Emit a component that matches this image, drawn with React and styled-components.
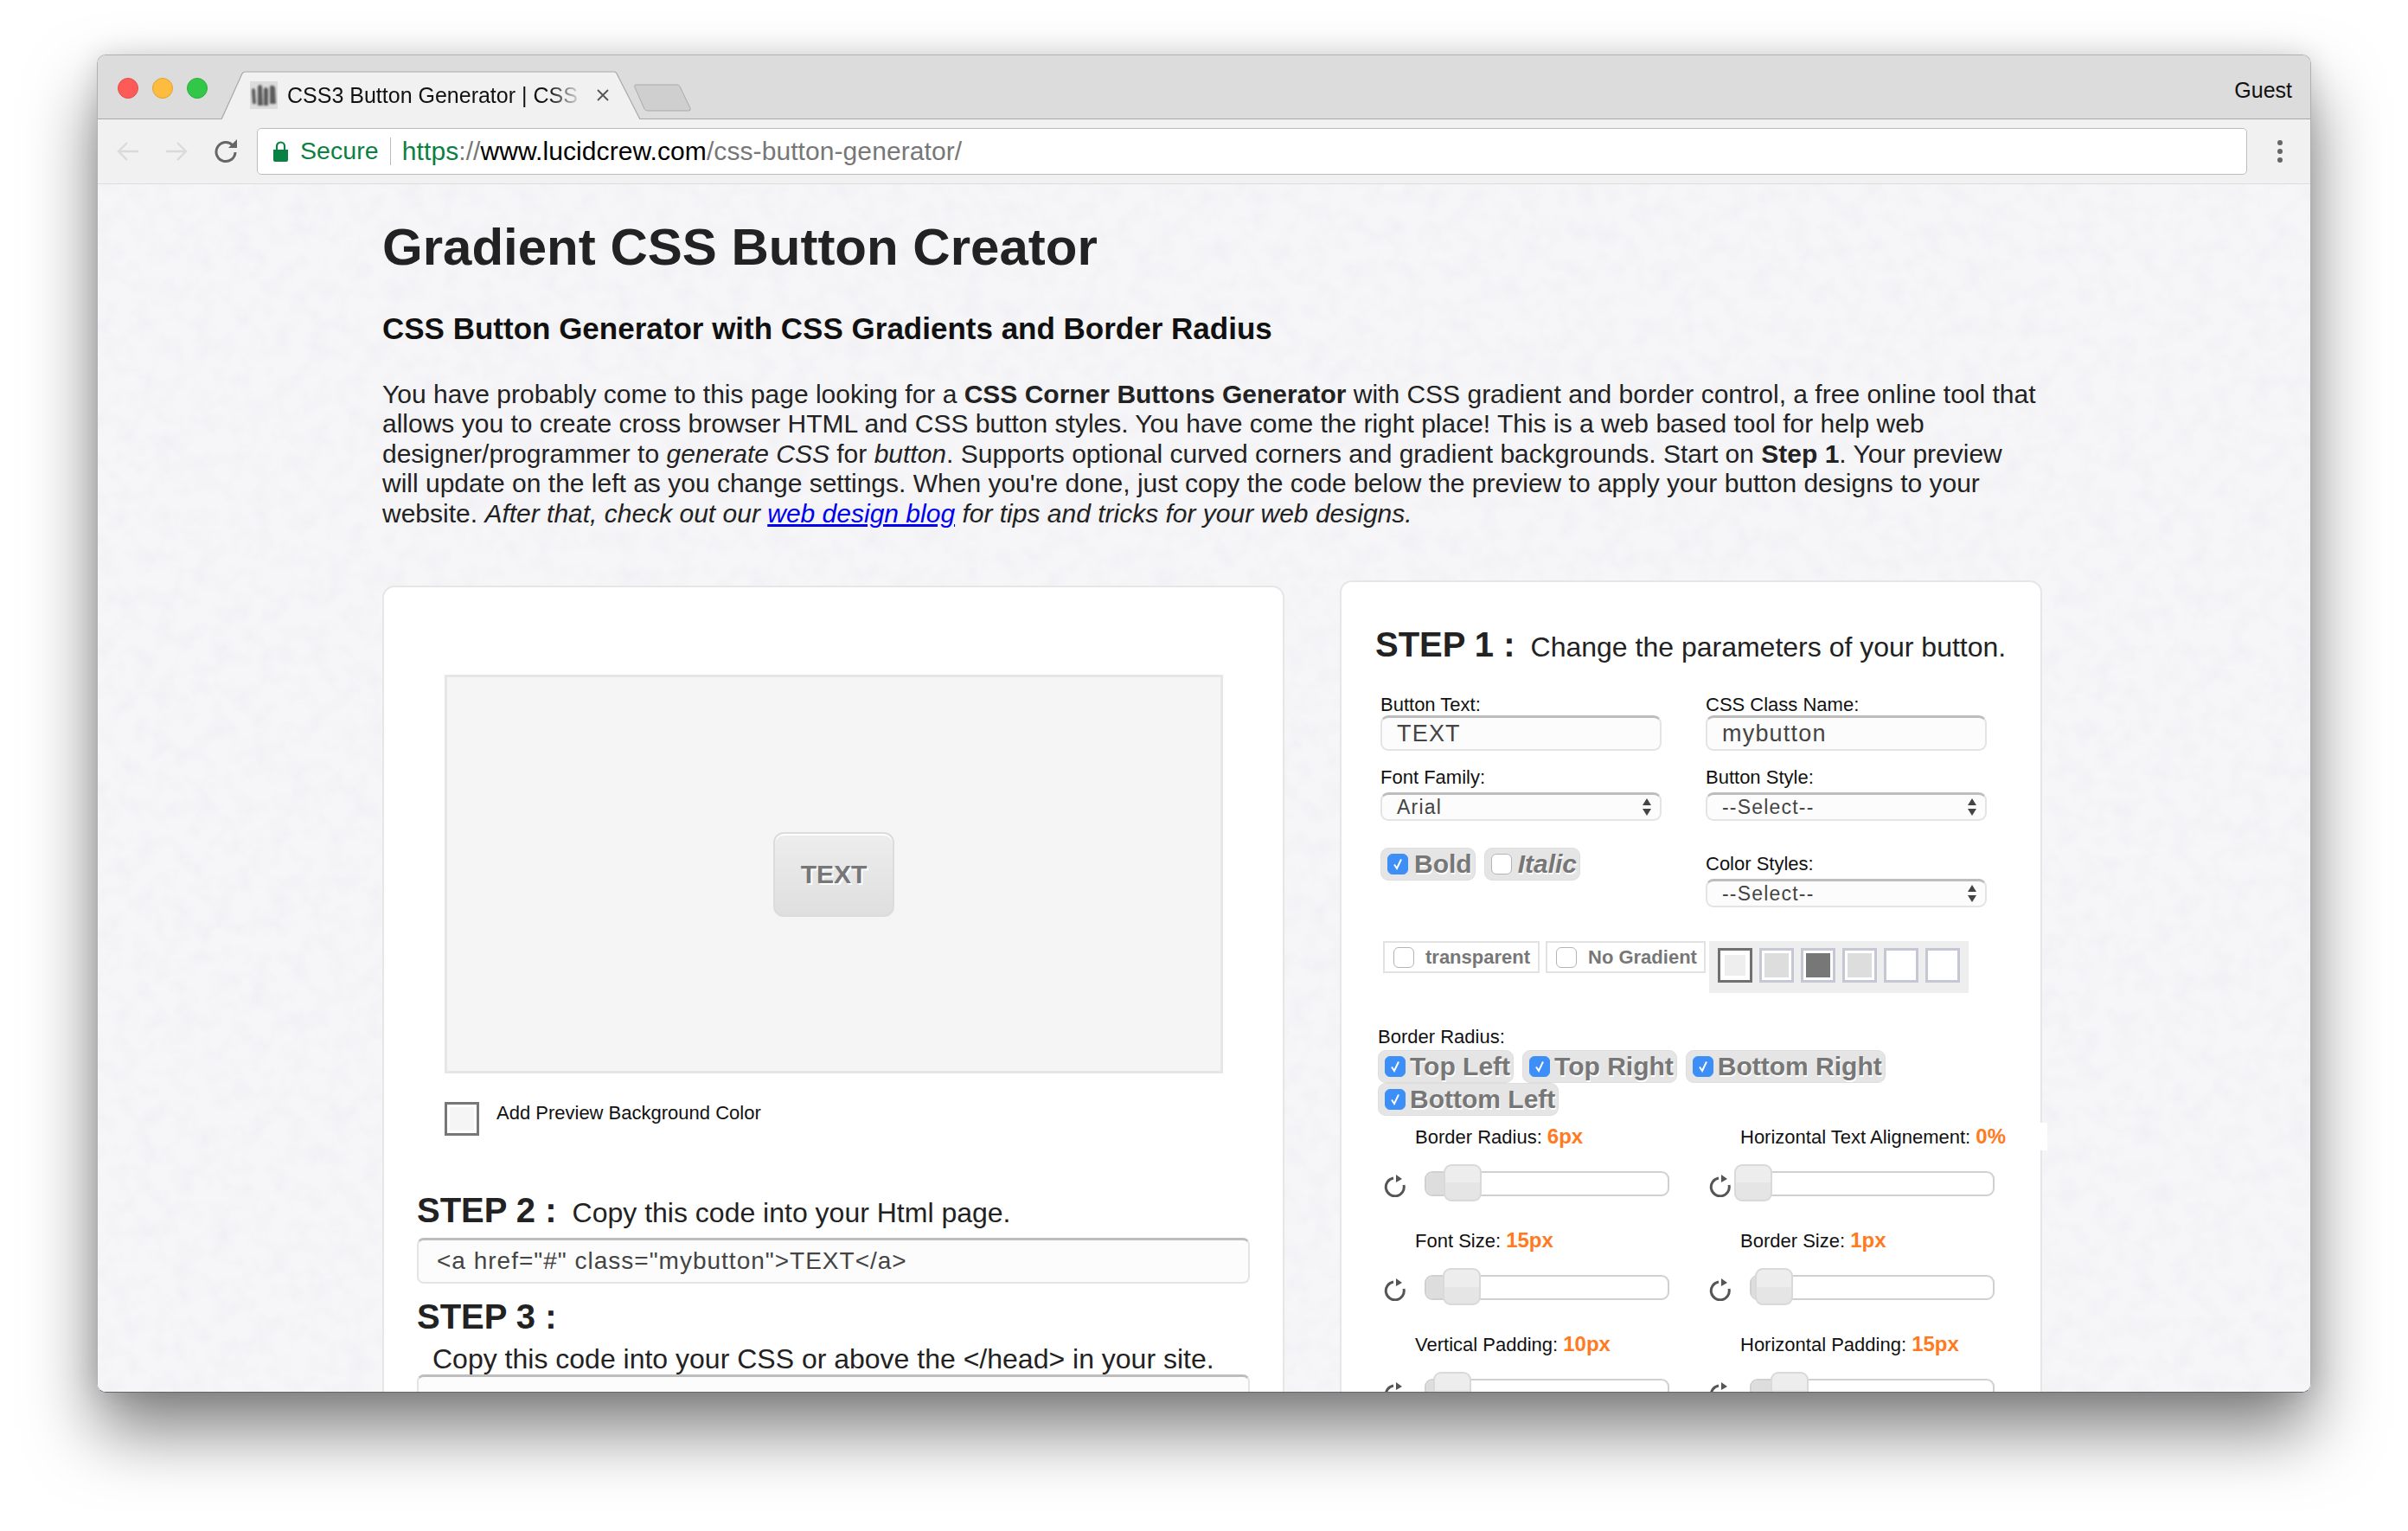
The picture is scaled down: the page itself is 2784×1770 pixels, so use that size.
import React from "react"
import styled, { createGlobalStyle } from "styled-components"

const GlobalStyle = createGlobalStyle`
    html, body {
        margin: 0;
        height: 100%;
        background: #fff;
        overflow: hidden;
        font-family: "Liberation Sans", Arial, sans-serif;
    }
    * { box-sizing: border-box; }
`

const Window = styled.div`
    width: 2560px;
    height: 1547px;
    margin: 63px 0 0 112px;
    display: flex;
    flex-direction: column;
    border-radius: 10px;
    overflow: hidden;
    border: 1px solid #b0b0b0;
    border-bottom-color: #666;
    box-shadow: 0 44px 80px rgba(0, 0, 0, 0.5), 0 0 30px rgba(0, 0, 0, 0.12);
`
const TabStrip = styled.div`
    position: relative;
    height: 74px;
    flex: none;
    display: flex;
    align-items: flex-start;
    background: #dcdcdc;
    border-bottom: 1px solid #a8a8a8;
`
const Lights = styled.div`
    display: flex;
    gap: 16px;
    padding: 26px 0 0 23px;
`
const Light = styled.span`
    width: 24px;
    height: 24px;
    border-radius: 50%;
    background: ${props => props.$color};
    border: 1px solid ${props => props.$edge};
`
const Tab = styled.div`
    position: relative;
    width: 484px;
    height: 56px;
    margin: 18px 0 0 16px;
    display: flex;
    align-items: center;
    padding: 0 0 0 33px;
`
const TabShape = styled.svg`
    position: absolute;
    left: 0;
    top: 0;
`
const Favicon = styled.svg`
    position: relative;
    flex: none;
`
const TabTitle = styled.span`
    position: relative;
    width: 352px;
    margin-left: 11px;
    overflow: hidden;
    white-space: nowrap;
    font-size: 25px;
    color: #111;
    -webkit-mask-image: linear-gradient(to right, #000 86%, transparent 97%);
    mask-image: linear-gradient(to right, #000 86%, transparent 97%);
`
const TabClose = styled.svg`
    position: relative;
    margin-left: 6px;
`
const NewTab = styled.svg`
    margin: 33px 0 0 -7px;
`
const Guest = styled.span`
    margin: 26px 21px 0 auto;
    font-size: 25px;
    line-height: 29px;
    color: #111;
`
const Toolbar = styled.div`
    height: 75px;
    flex: none;
    display: flex;
    align-items: center;
    background: #f1f1f1;
    border-bottom: 1px solid #dcdcdc;
`
const NavIcons = styled.div`
    width: 184px;
    padding-left: 22px;
    display: flex;
    align-items: center;
    gap: 30px;
`
const Address = styled.div`
    width: 2301px;
    height: 54px;
    display: flex;
    align-items: center;
    background: #fff;
    border: 1px solid #bcbcbc;
    border-radius: 5px;
    font-size: 30px;
    letter-spacing: 0.08px;
    padding-left: 18px;
    margin-top: -1px;
`
const Secure = styled.span`
    margin-left: 14px;
    font-size: 28.5px;
    color: #0b8043;
`
const Divider = styled.span`
    width: 1px;
    height: 32px;
    margin: 0 13px;
    background: #bbb;
`
const UrlPart = styled.span`
    color: ${props => props.$color};
`
const Dots = styled.div`
    margin-left: 35px;
    display: flex;
    flex-direction: column;
    gap: 4px;
    span {
        width: 6px;
        height: 6px;
        border-radius: 50%;
        background: #666;
    }
`
const Content = styled.div`
    position: relative;
    isolation: isolate;
    flex: 1;
    min-height: 0;
    padding: 38px 0 0 329px;
    background-color: #f6f6f8;
`
const Paper = styled.svg`
    position: absolute;
    left: 0;
    top: 0;
    width: 100%;
    height: 100%;
    z-index: -1;
`
const Title = styled.h1`
    margin: 0;
    font-size: 60px;
    line-height: 69px;
    font-weight: 700;
    color: #222;
`
const Subtitle = styled.h2`
    margin: 39px 0 0;
    font-size: 35px;
    line-height: 41px;
    font-weight: 700;
    color: #111;
`
const Intro = styled.p`
    margin: 39px 0 0;
    width: 1918px;
    font-size: 30px;
    line-height: 34.4px;
    color: #222;
    a { color: #00e; }
`
const Columns = styled.div`
    display: flex;
    align-items: flex-start;
    gap: 64px;
    margin-top: 60px;
`
const LeftCard = styled.div`
    width: 1043px;
    margin-top: 6px;
    padding: 101px 0 0 38px;
    background: #fff;
    border: 2px solid #e6e6e6;
    border-radius: 14px;
`
const RightCard = styled.div`
    width: 812px;
    padding: 49px 0 0 39px;
    background: #fff;
    border: 2px solid #e6e6e6;
    border-radius: 14px;
`
const Preview = styled.div`
    width: 900px;
    height: 461px;
    margin-left: 32px;
    display: flex;
    align-items: center;
    justify-content: center;
    background: #f5f5f5;
    border: 3px solid #e6e6e6;
`
const PreviewButton = styled.div`
    width: 140px;
    height: 98px;
    display: flex;
    align-items: center;
    justify-content: center;
    border: 2px solid #dcdcdc;
    border-radius: 12px;
    background: linear-gradient(#ededed, #dfdfdf);
    box-shadow: inset 0 2px 0 #fff;
    font-size: 30px;
    font-weight: 700;
    color: #777;
    text-shadow: 2px 2px 0 #fff;
`
const PreviewOption = styled.div`
    display: flex;
    margin: 33px 0 0 32px;
    font-size: 22px;
    color: #111;
`
const OptionSwatch = styled.span`
    width: 40px;
    height: 39px;
    margin-right: 20px;
    background: #f5f5f5;
    border: 3px solid #777;
    box-shadow: inset 0 0 0 3px #fff;
`
const StepHead = styled.div`
    display: flex;
    align-items: baseline;
    height: 47px;
    margin-top: ${props => props.$top || 0}px;
    font-size: 40px;
    line-height: 47px;
    font-weight: 700;
    color: #222;
    white-space: pre;
`
const StepText = styled.span`
    margin-left: 18px;
    font-size: 32px;
    font-weight: 400;
    color: #222;
`
const StepNote = styled.div`
    height: 38px;
    margin: 5px 0 0 18px;
    font-size: 32px;
    line-height: 40px;
    color: #222;
`
const CodeBox = styled.div`
    width: 963px;
    height: ${props => props.$height}px;
    margin-top: ${props => props.$top}px;
    padding: 0 0 0 21px;
    display: flex;
    align-items: center;
    background: #fcfcfc;
    border: 2px solid #e4e4e4;
    border-top: 3px solid #bdbdbd;
    border-radius: 8px;
    font-size: 28px;
    letter-spacing: 1px;
    color: #444;
`
const Row = styled.div`
    display: grid;
    grid-template-columns: 376px 325px;
    align-items: start;
    margin: ${props => props.$top}px 0 0 6px;
`
const Field = styled.div`
    padding-top: ${props => props.$pad || 0}px;
`
const Label = styled.div`
    height: 25px;
    font-size: 22px;
    line-height: 25px;
    color: #111;
`
const TextInput = styled.div`
    width: 325px;
    height: 41px;
    padding-left: 17px;
    display: flex;
    align-items: center;
    background: #fcfcfc;
    border: 2px solid #e4e4e4;
    border-top: 3px solid #bdbdbd;
    border-radius: 9px;
    font-size: 27px;
    letter-spacing: 1.2px;
    color: #444;
`
const SelectBox = styled.div`
    width: 325px;
    height: 33px;
    margin-top: 5px;
    padding: 0 9px 0 17px;
    display: flex;
    align-items: center;
    justify-content: space-between;
    background: #fcfcfc;
    border: 2px solid #e4e4e4;
    border-top: 3px solid #bdbdbd;
    border-radius: 9px;
    font-size: 23px;
    letter-spacing: 1.2px;
    color: #444;
`
const Chips = styled.div`
    display: flex;
    flex-wrap: wrap;
    column-gap: 10px;
    width: ${props => props.$width || 640}px;
    margin-left: ${props => props.$left || 0}px;
`
const Chip = styled.div`
    height: 38px;
    padding: 0 3px 0 7px;
    display: flex;
    align-items: center;
    gap: ${props => props.$gap || 7}px;
    background: #e5e5e5;
    border: 1px solid #dedede;
    border-radius: 9px;
    font-size: 30px;
    font-style: ${props => (props.$italic ? "italic" : "normal")};
    font-weight: 700;
    color: #777;
    text-shadow: 1px 2px 0 #fff;
`
const Tick = styled.span`
    width: 24px;
    height: 24px;
    flex: none;
    display: flex;
    align-items: center;
    justify-content: center;
    border-radius: 6px;
    background: ${props => (props.$on ? "#3d8ef7" : "#fff")};
    border: 1px solid ${props => (props.$on ? "#3d8ef7" : "#b4b4b4")};
`
const ColorRow = styled.div`
    display: flex;
    align-items: flex-start;
    margin: 39px 0 0 9px;
`
const PlainChip = styled.div`
    width: ${props => props.$width}px;
    height: 37px;
    margin-right: 7px;
    padding-left: 10px;
    display: flex;
    align-items: center;
    gap: 13px;
    background: #fff;
    border: 2px solid #e2e2e2;
    font-size: 22px;
    font-weight: 700;
    color: #777;
`
const SwatchPanel = styled.div`
    display: flex;
    gap: 8px;
    width: 300px;
    height: 60px;
    margin-left: -3px;
    padding: 8px 0 0 10px;
    background: #eee;
`
const Swatch = styled.span`
    width: 40px;
    height: 40px;
    background: ${props => props.$color};
    border: 3px solid ${props => (props.$active ? "#707070" : "#c5c8d4")};
    box-shadow: inset 0 0 0 ${props => (props.$active ? 5 : 3)}px #fff;
`
const RadiusLabel = styled(Label)`
    margin: 38px 0 3px 3px;
`
const SliderGrid = styled.div`
    display: grid;
    grid-template-columns: 376px 375px;
    grid-auto-rows: 120px;
    margin: 8px 0 0 3px;
`
const SliderLabel = styled.div`
    width: fit-content;
    height: 32px;
    margin-left: 43px;
    padding-right: 48px;
    background: #fff;
    font-size: 22px;
    line-height: 32px;
    white-space: nowrap;
    color: #111;
    b { color: #ff7a20; font-size: 24px; }
`
const SliderRow = styled.div`
    display: flex;
    align-items: center;
    height: 29px;
    margin-top: 24px;
    padding-left: 7px;
`
const Track = styled.div`
    position: relative;
    width: 283px;
    height: 29px;
    margin-left: ${props => props.$gap}px;
    background: #fff;
    border: 2px solid #d0d0d0;
    border-radius: 9px;
`
const TrackFill = styled.div`
    height: 100%;
    width: ${props => props.$width}px;
    background: #ddd;
    border-radius: 7px 0 0 7px;
`
const Handle = styled.div`
    position: absolute;
    top: -10px;
    left: ${props => props.$left}px;
    width: 44px;
    height: 43px;
    background: linear-gradient(#ededed 50%, #e6e6e6 50%, #e4e4e4);
    border: 2px solid #d9d9d9;
    border-radius: 9px;
`

const Check = () => (
    <svg width="14" height="16" viewBox="0 0 14 16">
        <path d="M3 8.5 L6 13 L11 2.5" fill="none" stroke="#fff" strokeWidth="2" />
    </svg>
)

const Arrows = () => (
    <svg width="12" height="22" viewBox="0 0 12 22">
        <path d="M6 1 L11 9 H1 Z M1 13 H11 L6 21 Z" fill="#444" />
    </svg>
)

const Reset = () => (
    <svg width="26" height="30" viewBox="0 0 26 30">
        <path d="M11 8 A10.5 10.5 0 1 0 23 16" fill="none" stroke="#555" strokeWidth="3" />
        <path d="M14 4 L21 9 L14 13 Z" fill="#555" />
    </svg>
)

const sliders = [
    { name: "Border Radius: ", value: "6px", gap: 21, left: 20, fill: 20 },
    { name: "Horizontal Text Alignement: ", value: "0%", gap: 21, left: -20, fill: 0 },
    { name: "Font Size: ", value: "15px", gap: 21, left: 19, fill: 19 },
    { name: "Border Size: ", value: "1px", gap: 21, left: 4, fill: 4 },
    { name: "Vertical Padding: ", value: "10px", gap: 21, left: 8, fill: 8 },
    { name: "Horizontal Padding: ", value: "15px", gap: 21, left: 22, fill: 22 },
]

const swatches = [
    { color: "#eee", active: true },
    { color: "#ddd" },
    { color: "#777" },
    { color: "#ddd" },
    { color: "#fff" },
    { color: "#fff" },
]

const App = () => {
    return (
        <>
            <GlobalStyle />
            <Window>
                <TabStrip>
                    <Lights>
                        <Light $color="#fc5b57" $edge="#e64c48" />
                        <Light $color="#fdbc40" $edge="#e0a32e" />
                        <Light $color="#33c748" $edge="#28ae3a" />
                    </Lights>
                    <Tab>
                        <TabShape width="484" height="56" viewBox="0 0 484 56">
                            <path d="M0 56 L24 3 Q25 1 28 1 H454 Q456 1 457 3 L484 56" fill="#f1f1f1" stroke="#a8a8a8" strokeWidth="1.2" />
                        </TabShape>
                        <Favicon width="32" height="32" viewBox="0 0 32 32">
                            <defs>
                                <filter id="soft"><feGaussianBlur stdDeviation="0.8" /></filter>
                            </defs>
                            <rect width="32" height="32" fill="#dcdcdc" />
                            <g fill="#5c5c5c" filter="url(#soft)">
                                <path d="M2 10 Q4 6 6 10 L7 26 H3 Z" />
                                <path d="M9 6 Q12 2 14 6 L15 28 H9 Z" />
                                <path d="M16 9 Q18 5 21 9 L21 28 H16 Z" />
                                <path d="M23 6 Q26 3 29 7 L30 26 H23 Z" />
                            </g>
                        </Favicon>
                        <TabTitle>CSS3 Button Generator | CSS Button</TabTitle>
                        <TabClose width="14" height="14" viewBox="0 0 14 14">
                            <path d="M1 1 L13 13 M13 1 L1 13" stroke="#555" strokeWidth="1.8" />
                        </TabClose>
                    </Tab>
                    <NewTab width="66" height="32" viewBox="0 0 66 32">
                        <path d="M2 1 H50 Q52 1 53 3 L65 28 Q66 31 63 31 H16 Q13 31 12 29 L1 4 Q0 1 2 1 Z" fill="#cfcfcf" stroke="#aaa" />
                    </NewTab>
                    <Guest>Guest</Guest>
                </TabStrip>
                <Toolbar>
                    <NavIcons>
                        <svg width="26" height="26" viewBox="0 0 26 26">
                            <path d="M25 13 H3 M12 3 L2 13 L12 23" fill="none" stroke="#dadada" strokeWidth="2.4" />
                        </svg>
                        <svg width="26" height="26" viewBox="0 0 26 26">
                            <path d="M1 13 H23 M14 3 L24 13 L14 23" fill="none" stroke="#dadada" strokeWidth="2.4" />
                        </svg>
                        <svg width="28" height="28" viewBox="0 0 28 28">
                            <path d="M22 7 A11 11 0 1 0 25 15" fill="none" stroke="#666" strokeWidth="3" />
                            <path d="M17 10 H27 V0 Z" fill="#666" />
                        </svg>
                    </NavIcons>
                    <Address>
                        <svg width="17" height="24" viewBox="0 0 17 24">
                            <path d="M0 10 H17 V22 Q17 24 15 24 H2 Q0 24 0 22 Z" fill="#0b8043" />
                            <path d="M4 10 V6 A4.5 4.5 0 0 1 13 6 V10" fill="none" stroke="#0b8043" strokeWidth="2.2" />
                        </svg>
                        <Secure>Secure</Secure>
                        <Divider />
                        <UrlPart $color="#0b8043">https</UrlPart>
                        <UrlPart $color="#777">://</UrlPart>
                        <UrlPart $color="#000">www.lucidcrew.com</UrlPart>
                        <UrlPart $color="#777">/css-button-generator/</UrlPart>
                    </Address>
                    <Dots><span /><span /><span /></Dots>
                </Toolbar>
                <Content>
                    <Paper>
                        <filter id="paper">
                            <feTurbulence type="fractalNoise" baseFrequency="0.045" numOctaves="4" seed="7" />
                            <feColorMatrix values="0 0 0 0 0.87  0 0 0 0 0.87  0 0 0 0 0.91  1.6 0 0 0 -0.62" />
                        </filter>
                        <rect width="100%" height="100%" filter="url(#paper)" />
                    </Paper>
                    <Title>Gradient CSS Button Creator</Title>
                    <Subtitle>CSS Button Generator with CSS Gradients and Border Radius</Subtitle>
                    <Intro>
                        You have probably come to this page looking for a <b>CSS Corner Buttons Generator</b> with CSS gradient and border control, a free online tool that allows you to create cross browser HTML and CSS button styles. You have come the right place! This is a web based tool for help web designer/programmer to <i>generate CSS</i> for <i>button</i>. Supports optional curved corners and gradient backgrounds. Start on <b>Step 1</b>. Your preview will update on the left as you change settings. When you're done, just copy the code below the preview to apply your button designs to your website. <i>After that, check out our <a href="#blog">web design blog</a> for tips and tricks for your web designs.</i>
                    </Intro>
                    <Columns>
                        <LeftCard>
                            <Preview>
                                <PreviewButton>TEXT</PreviewButton>
                            </Preview>
                            <PreviewOption>
                                <OptionSwatch />
                                Add Preview Background Color
                            </PreviewOption>
                            <StepHead $top={63}>
                                STEP 2 :<StepText>Copy this code into your Html page.</StepText>
                            </StepHead>
                            <CodeBox $height={53} $top={8}>{'<a href="#" class="mybutton">TEXT</a>'}</CodeBox>
                            <StepHead $top={15}>STEP 3 :</StepHead>
                            <StepNote>Copy this code into your CSS or above the {"</head>"} in your site.</StepNote>
                            <CodeBox $height={80} $top={0} />
                        </LeftCard>
                        <RightCard>
                            <StepHead>
                                STEP 1 :<StepText>Change the parameters of your button.</StepText>
                            </StepHead>
                            <Row $top={33}>
                                <Field>
                                    <Label>Button Text:</Label>
                                    <TextInput>TEXT</TextInput>
                                </Field>
                                <Field>
                                    <Label>CSS Class Name:</Label>
                                    <TextInput>mybutton</TextInput>
                                </Field>
                            </Row>
                            <Row $top={18}>
                                <Field>
                                    <Label>Font Family:</Label>
                                    <SelectBox>Arial<Arrows /></SelectBox>
                                </Field>
                                <Field>
                                    <Label>Button Style:</Label>
                                    <SelectBox>--Select--<Arrows /></SelectBox>
                                </Field>
                            </Row>
                            <Row $top={31}>
                                <Chips $width={300}>
                                    <Chip><Tick $on><Check /></Tick>Bold</Chip>
                                    <Chip $italic><Tick />Italic</Chip>
                                </Chips>
                                <Field $pad={6}>
                                    <Label>Color Styles:</Label>
                                    <SelectBox>--Select--<Arrows /></SelectBox>
                                </Field>
                            </Row>
                            <ColorRow>
                                <PlainChip $width={181}><Tick />transparent</PlainChip>
                                <PlainChip $width={185}><Tick />No Gradient</PlainChip>
                                <SwatchPanel>
                                    {swatches.map((s, i) => (
                                        <Swatch key={i} $color={s.color} $active={s.active} />
                                    ))}
                                </SwatchPanel>
                            </ColorRow>
                            <RadiusLabel>Border Radius:</RadiusLabel>
                            <Chips $left={3}>
                                <Chip $gap={5}><Tick $on><Check /></Tick>Top Left</Chip>
                                <Chip $gap={5}><Tick $on><Check /></Tick>Top Right</Chip>
                                <Chip $gap={5}><Tick $on><Check /></Tick>Bottom Right</Chip>
                                <Chip $gap={5}><Tick $on><Check /></Tick>Bottom Left</Chip>
                            </Chips>
                            <SliderGrid>
                                {sliders.map(s => (
                                    <div key={s.name}>
                                        <SliderLabel>{s.name}<b>{s.value}</b></SliderLabel>
                                        <SliderRow>
                                            <Reset />
                                            <Track $gap={s.gap}>
                                                <TrackFill $width={s.fill} />
                                                <Handle $left={s.left} />
                                            </Track>
                                        </SliderRow>
                                    </div>
                                ))}
                            </SliderGrid>
                        </RightCard>
                    </Columns>
                </Content>
            </Window>
        </>
    )
}

export default App
